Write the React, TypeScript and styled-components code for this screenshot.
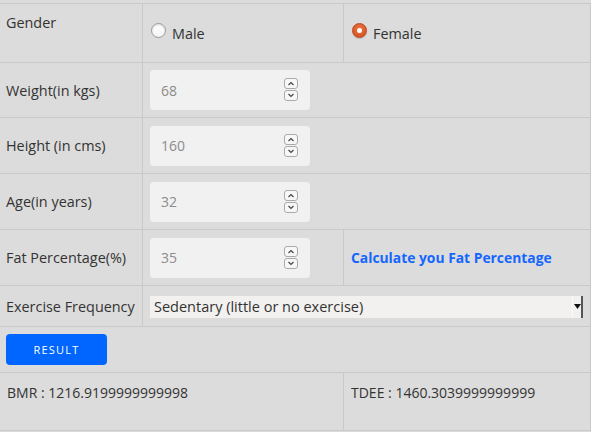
import React from "react";
import styled, { createGlobalStyle } from "styled-components";

const Global = createGlobalStyle`
  html, body { margin: 0; padding: 0; background: #dcdcdc; }
  body { font-family: "Open Sans", "Liberation Sans", sans-serif; font-size: 14px; color: #333; }
  * { box-sizing: border-box; }
`;

const Page = styled.div`
  padding-top: 3px;
  width: 591px;
  height: 432px;
  background: #dcdcdc;
`;

const Table = styled.div`
  display: grid;
  grid-template-columns: 143px 201px 247px;
  grid-template-rows: 59px 55px 56px 56px 56px 41px 46px 58px;
  border-top: 1px solid #c9c9c9;
`;

const Cell = styled.div<{ $span?: number; $top?: boolean }>`
  grid-column: span ${(p) => p.$span ?? 1};
  display: flex;
  align-items: ${(p) => (p.$top ? "flex-start" : "center")};
  padding: ${(p) => (p.$top ? "9px 7px 0 7px" : "0 7px")};
  border-bottom: 1px solid #c9c9c9;
  border-right: 1px solid #c9c9c9;
`;

const LabelCell = styled(Cell)`
  padding-left: 6px;
  color: #333;
  font-size: 14.4px;
  white-space: nowrap;
`;

const OutCell = styled(Cell)`
  padding-top: 10px;
`;

const RadioLabel = styled.label`
  display: flex;
  align-items: center;
  gap: 6px;
  padding-left: 1px;
  color: #333;
  font-size: 14.4px;
`;

const RadioDot = styled.span<{ $checked?: boolean }>`
  width: 15px;
  height: 15px;
  margin-top: -6px;
  border-radius: 50%;
  flex: none;
  display: flex;
  align-items: center;
  justify-content: center;
  background: ${(p) =>
    p.$checked
      ? "radial-gradient(circle at 50% 40%, #f07a4b 0%, #dd5a29 60%, #c94a1c 100%)"
      : "linear-gradient(#ffffff, #f4f4f4)"};
  border: 1px solid ${(p) => (p.$checked ? "#b8471e" : "#9a9a9a")};
  box-shadow: ${(p) => (p.$checked ? "0 1px 1px rgba(0,0,0,0.15)" : "inset 0 1px 2px rgba(0,0,0,0.15)")};
  &::after {
    content: "";
    display: ${(p) => (p.$checked ? "block" : "none")};
    width: 5px;
    height: 5px;
    border-radius: 50%;
    background: #fff;
  }
`;

const NumberBox = styled.div`
  width: 160px;
  height: 40px;
  display: flex;
  align-items: center;
  padding: 0 12px 0 11px;
  background: #f1f1f1;
  border-radius: 4px;
`;

const NumberValue = styled.input`
  flex: 1;
  min-width: 0;
  border: none;
  background: transparent;
  outline: none;
  padding: 0;
  font-family: "Open Sans", "Liberation Sans", sans-serif;
  font-size: 14px;
  color: #8c8c8c;
`;

const LinkText = styled.a`
  font-weight: 700;
  color: #1466ff;
  text-decoration: none;
  font-size: 13.85px;
`;

const SelectBox = styled.div`
  width: 433px;
  height: 22px;
  display: flex;
  align-items: stretch;
  background: #f2f1ef;
  margin-top: 1px;
`;

const SelectText = styled.span`
  flex: 1;
  padding-left: 4px;
  line-height: 22px;
  color: #333;
  font-size: 14.5px;
  white-space: nowrap;
`;

const SelectArrow = styled.span`
  width: 11px;
  display: flex;
  align-items: center;
  justify-content: center;
  border-left: 1px solid #fafafa;
  border-right: 2px solid #555;
`;

const ResultButton = styled.button`
  width: 101px;
  height: 31px;
  margin-left: -1px;
  border: none;
  border-radius: 4px;
  background: #0066ff;
  color: #fff;
  font-family: "Open Sans", "Liberation Sans", sans-serif;
  font-size: 11px;
  letter-spacing: 1.2px;
  padding: 0;
`;

const Spinner = () => (
  <svg width="14" height="24" viewBox="0 0 14 24" style={{ flex: "none" }}>
    <rect x="0.5" y="0.5" width="13" height="10" rx="2.5" fill="#f7f7f7" stroke="#a9a9a9" />
    <rect x="0.5" y="12.5" width="13" height="10" rx="2.5" fill="#f7f7f7" stroke="#a9a9a9" />
    <path d="M4.5 7 L7 4.5 L9.5 7" fill="none" stroke="#444" strokeWidth="1.2" />
    <path d="M4.5 16 L7 18.5 L9.5 16" fill="none" stroke="#444" strokeWidth="1.2" />
  </svg>
);

const NumberField = ({ value }: { value: string }) => (
  <NumberBox>
    <NumberValue type="text" readOnly value={value} />
    <Spinner />
  </NumberBox>
);

export default function App() {
  return (
    <Page>
      <Global />
      <Table>
        <LabelCell $top>Gender</LabelCell>
        <Cell>
          <RadioLabel>
            <RadioDot />
            Male
          </RadioLabel>
        </Cell>
        <Cell>
          <RadioLabel>
            <RadioDot $checked />
            Female
          </RadioLabel>
        </Cell>

        <LabelCell>Weight(in kgs)</LabelCell>
        <Cell $span={2}>
          <NumberField value="68" />
        </Cell>

        <LabelCell>Height (in cms)</LabelCell>
        <Cell $span={2}>
          <NumberField value="160" />
        </Cell>

        <LabelCell>Age(in years)</LabelCell>
        <Cell $span={2}>
          <NumberField value="32" />
        </Cell>

        <LabelCell>Fat Percentage(%)</LabelCell>
        <Cell>
          <NumberField value="35" />
        </Cell>
        <Cell>
          <LinkText href="#">Calculate you Fat Percentage</LinkText>
        </Cell>

        <LabelCell>Exercise Frequency</LabelCell>
        <Cell $span={2}>
          <SelectBox>
            <SelectText>Sedentary (little or no exercise)</SelectText>
            <SelectArrow>
              <svg width="7" height="5" viewBox="0 0 7 5">
                <path d="M0 0 H7 L3.5 5 Z" fill="#111" />
              </svg>
            </SelectArrow>
          </SelectBox>
        </Cell>

        <Cell $span={3}>
          <ResultButton>RESULT</ResultButton>
        </Cell>

        <OutCell $top $span={2}>BMR : 1216.9199999999998</OutCell>
        <OutCell $top>TDEE : 1460.3039999999999</OutCell>
      </Table>
    </Page>
  );
}
